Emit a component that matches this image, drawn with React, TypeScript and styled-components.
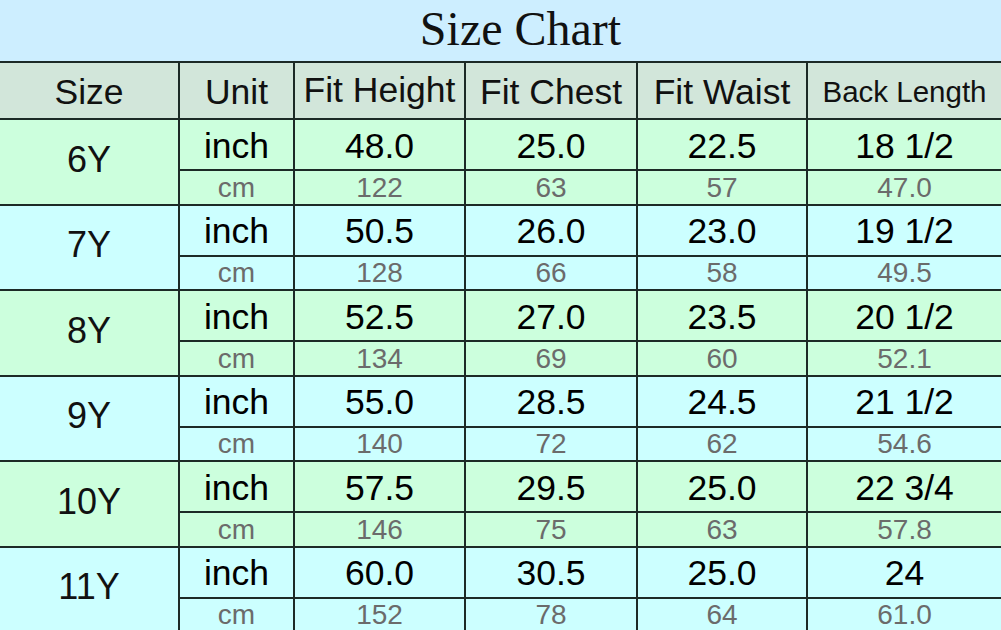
import React from "react";
import styled, { createGlobalStyle } from "styled-components";

const GlobalStyle = createGlobalStyle`
  html, body {
    margin: 0;
    padding: 0;
    background: #ccffff;
    overflow: hidden;
  }
`;

const Page = styled.div`
  width: 1001px;
  height: 630px;
  overflow: hidden;
  font-family: "Liberation Sans", Arial, sans-serif;
`;

const Title = styled.h1`
  margin: 0;
  height: 61px;
  background: #cdeeff;
  font-family: "Liberation Serif", "Times New Roman", serif;
  font-weight: normal;
  font-size: 48px;
  line-height: 58px;
  color: #111;
  text-align: center;
  padding-left: 40px;
  box-sizing: border-box;
`;

const Grid = styled.div`
  display: grid;
  grid-template-columns: 178px 113px 169px 170px 168px 193px;
  grid-template-rows: 55px repeat(6, 49px 32.5px);
  gap: 2px;
  padding-top: 2px;
  background: #1c2a26;
`;

const HeadCell = styled.div<{ $small?: boolean; $lift?: boolean }>`
  display: flex;
  align-items: center;
  justify-content: center;
  background: #d2e6da;
  color: #111;
  font-size: ${(props) => (props.$small ? "29.5px" : "35.5px")};
  padding-top: ${(props) => (props.$lift ? 0 : 3)}px;
  white-space: nowrap;
`;

const SizeCell = styled.div<{ $bg: string }>`
  grid-row: span 2;
  display: flex;
  align-items: center;
  justify-content: center;
  padding-bottom: 4px;
  background: ${(props) => props.$bg};
  color: #111;
  font-size: 36px;
`;

const InchCell = styled.div<{ $bg: string }>`
  display: flex;
  align-items: center;
  justify-content: center;
  padding-top: 3px;
  background: ${(props) => props.$bg};
  color: #000;
  font-size: 35.5px;
  white-space: nowrap;
`;

const CmCell = styled.div<{ $bg: string }>`
  display: flex;
  align-items: center;
  justify-content: center;
  padding-top: 1px;
  box-sizing: border-box;
  background: ${(props) => props.$bg};
  color: #6b6b6b;
  font-size: 28px;
  white-space: nowrap;
`;

const GREEN = "#ccffdd";
const CYAN = "#ccffff";

const rows = [
  { size: "6Y", inch: ["48.0", "25.0", "22.5", "18 1/2"], cm: ["122", "63", "57", "47.0"] },
  { size: "7Y", inch: ["50.5", "26.0", "23.0", "19 1/2"], cm: ["128", "66", "58", "49.5"] },
  { size: "8Y", inch: ["52.5", "27.0", "23.5", "20 1/2"], cm: ["134", "69", "60", "52.1"] },
  { size: "9Y", inch: ["55.0", "28.5", "24.5", "21 1/2"], cm: ["140", "72", "62", "54.6"] },
  { size: "10Y", inch: ["57.5", "29.5", "25.0", "22 3/4"], cm: ["146", "75", "63", "57.8"] },
  { size: "11Y", inch: ["60.0", "30.5", "25.0", "24"], cm: ["152", "78", "64", "61.0"] },
];

export default function App() {
  return (
    <Page>
      <GlobalStyle />
      <Title>Size Chart</Title>
      <Grid>
        <HeadCell>Size</HeadCell>
        <HeadCell>Unit</HeadCell>
        <HeadCell $lift>Fit Height</HeadCell>
        <HeadCell>Fit Chest</HeadCell>
        <HeadCell>Fit Waist</HeadCell>
        <HeadCell $small>Back Length</HeadCell>
        {rows.map((row, i) => {
          const bg = i % 2 === 0 ? GREEN : CYAN;
          return (
            <React.Fragment key={row.size}>
              <SizeCell $bg={bg}>{row.size}</SizeCell>
              <InchCell $bg={bg}>inch</InchCell>
              {row.inch.map((v, j) => (
                <InchCell key={`i${j}`} $bg={bg}>
                  {v}
                </InchCell>
              ))}
              <CmCell $bg={bg}>cm</CmCell>
              {row.cm.map((v, j) => (
                <CmCell key={`c${j}`} $bg={bg}>
                  {v}
                </CmCell>
              ))}
            </React.Fragment>
          );
        })}
      </Grid>
    </Page>
  );
}
